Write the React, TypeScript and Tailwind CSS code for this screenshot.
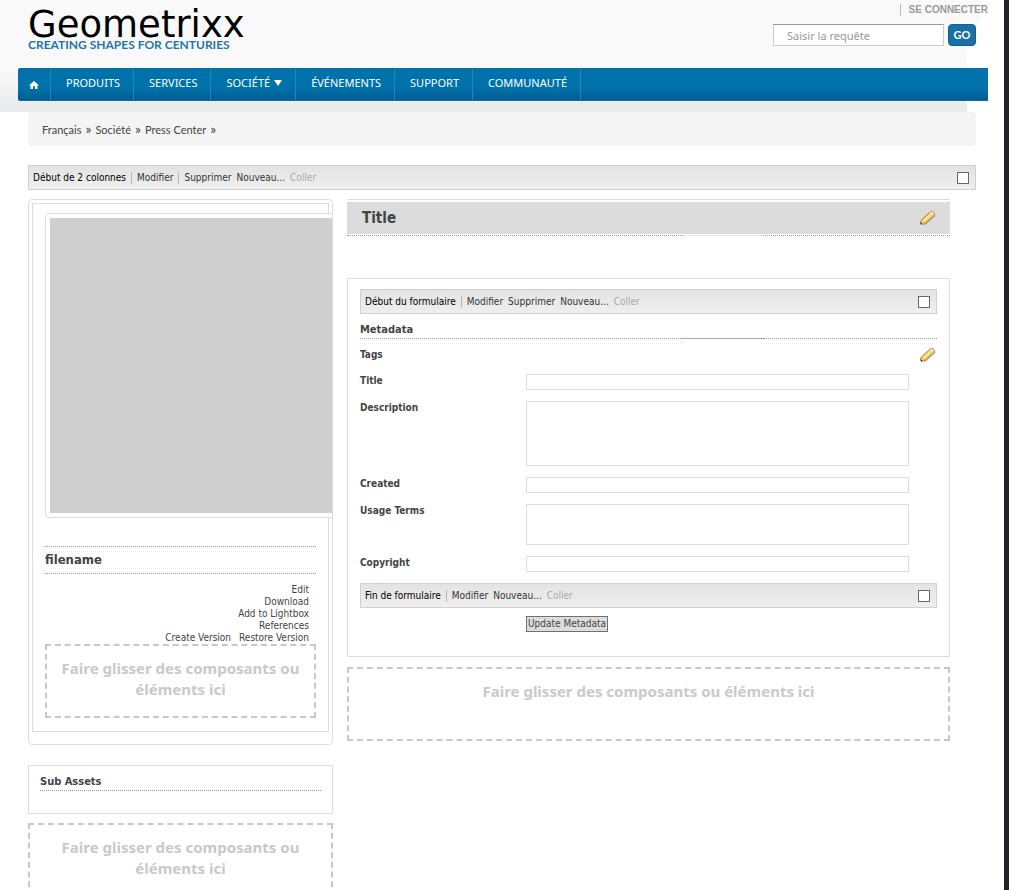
import type { ReactNode } from "react";

const NAV = ["PRODUITS", "SERVICES", "SOCIÉTÉ", "ÉVÉNEMENTS", "SUPPORT", "COMMUNAUTÉ"];
const CRUMBS = ["Français", "Société", "Press Center"];

function Pencil() {
  return (
    <svg width="18" height="18" viewBox="0 0 18 18" aria-hidden="true">
      <path d="M4 16 7 15.6 16.6 7 15.6 4.6 8 12Z" fill="#85858c" opacity=".6" />
      <path d="M1.6 14.2 2 11.4 11 3Q12.8 1.6 14.6 3 16 4.6 14.6 6.4L6 14.4 3 15.2Z" fill="#f3c356" stroke="#b57f3e" />
      <path d="M11 3.2Q12.8 1.8 14.4 3.2 15.8 4.6 14.4 6.3L13.2 7.3 10 4.2Z" fill="#f8e0cc" stroke="#d9a878" strokeWidth=".6" />
      <path d="M4.2 12 11.2 5.6" stroke="#fff79a" strokeWidth="1.3" />
      <path d="M5.6 13 12.4 6.8" stroke="#fbe45c" strokeWidth="1.3" />
      <path d="M2.2 11.8 5.4 14.4 2.6 15Z" fill="#f2cfa4" />
      <path d="M1.5 13 3.8 15 1.8 15.4Z" fill="#33241a" />
    </svg>
  );
}

function DropZone() {
  return (
    <div className="h-[74px] border-2 border-dashed border-[#c8c8c8] px-3 pt-3 text-center font-['Noto_Sans',sans-serif] text-[15px] leading-[21px] font-bold text-[#c9c9c9]">
      Faire glisser des composants ou éléments ici
    </div>
  );
}

function Separator() {
  return <span className="h-3 w-px bg-[#b9b9b0]" />;
}

function EditBar({ title, actions, split = false }: { title: string; actions: string[]; split?: boolean }) {
  return (
    <div className="flex h-[25px] items-center gap-[5px] border border-[#d0d0d0] bg-linear-to-b from-[#e3e3e3] to-[#efefef] pr-[6px] pl-1 text-[#333]">
      <span className="text-black">{title}</span>
      <Separator />
      {actions.map((a, i) => (
        <span key={a} className="flex items-center gap-[5px]">
          <button type="button">{a}</button>
          {split && i === 0 && <Separator />}
        </span>
      ))}
      <button type="button" disabled className="text-[#aaa]">Coller</button>
      <input
        type="checkbox"
        aria-label={title}
        className="ml-auto size-3 appearance-none border border-[#666] bg-white checked:bg-[#0072aa]"
      />
    </div>
  );
}

function BrokenRule({ middle }: { middle: ReactNode }) {
  return (
    <div className="flex">
      <span className="flex-1 border-b border-dotted border-[#999]" />
      {middle}
    </div>
  );
}

function Field({ id, label, rows }: { id: string; label: string; rows?: string }) {
  const box = "block w-full resize-none border border-[#ddd] bg-white px-1 outline-none";
  return (
    <div className="flex pr-7">
      <label htmlFor={id} className="w-[166px] shrink-0 leading-[14px] font-bold">{label}</label>
      <div className="flex-1">
        {rows ? <textarea id={id} className={`${box} ${rows}`} /> : <input id={id} type="text" className={`${box} h-4`} />}
      </div>
    </div>
  );
}

export default function App() {
  return (
    <div className="flex min-h-screen bg-white font-['DejaVu_Sans_Condensed','DejaVu_Sans',sans-serif] text-[10px] leading-3 text-[#444]">
      <div className="min-w-0 flex-1">
        <header className="bg-[linear-gradient(#f9f9f9,#f9f9f9),linear-gradient(#f9f9f9_62%,#e8e9eb)] bg-[length:calc(100%-23px)_23px,calc(100%-37px)_112px] bg-no-repeat">
          <div className="flex h-[68px] justify-between pr-4 pl-7">
            <a href="#home" className="pt-2 whitespace-nowrap">
              <span className="block font-['DejaVu_Sans',sans-serif] text-[37px] leading-[34px] text-black">Geometrixx</span>
              <span className="block font-['Lato',sans-serif] text-xs leading-[6px] font-bold text-[#1f75a8]">CREATING SHAPES FOR CENTURIES</span>
            </a>
            <div className="pt-1">
              <div className="flex justify-end">
                <a href="#login" className="border-l border-[#bbb] pl-2 font-['Liberation_Sans',sans-serif] font-bold text-[#999]">SE CONNECTER</a>
              </div>
              <form className="mt-2 flex gap-1 pr-3" onSubmit={(e) => e.preventDefault()}>
                <input
                  type="search"
                  aria-label="Saisir la requête"
                  placeholder="Saisir la requête"
                  className="h-[22px] w-[171px] border border-t-[#999] border-r-[#ccc] border-b-[#ccc] border-l-[#ccc] bg-white px-[13px] font-['Noto_Sans',sans-serif] text-[11px] outline-none placeholder:text-[#999]"
                />
                <button type="submit" className="h-[22px] w-7 rounded-sm border border-[#0f6095] bg-[#1a6fa5] font-['Lato',sans-serif] text-[11px] font-bold text-white">GO</button>
              </form>
            </div>
          </div>
          <nav className="mr-4 ml-[18px] flex h-[33px] rounded-l-xs border-y border-[#0a6ea3] bg-linear-to-b from-[#0072ab] from-60% to-[#005e93] font-['Noto_Sans',sans-serif] text-[11px] text-white">
            <a href="#home" aria-label="Accueil" className="flex w-[33px] items-center justify-center border-r border-[#2587b8]">
              <svg width="10" height="8" viewBox="0 0 10 8" aria-hidden="true">
                <path d="M5 0 0 4.6h1.5V8H4V5.3h2V8h2.5V4.6H10Z" fill="#fff" />
              </svg>
            </a>
            {NAV.map((n) => (
              <a key={n} href="#section" className="flex items-center gap-1 border-r border-[#2587b8] pr-[13px] pb-1 pl-[15px]">
                {n}
                {n === "SOCIÉTÉ" && (
                  <svg width="8" height="6" viewBox="0 0 8 6" aria-hidden="true">
                    <path d="M0 0h8L4 6Z" fill="#fff" />
                  </svg>
                )}
              </a>
            ))}
          </nav>
          <div className="h-[11px]" />
        </header>

        <main className="pr-7 pl-7">
          <nav aria-label="Fil d’Ariane" className="flex h-[34px] items-center gap-1 rounded bg-[#f4f4f4] pt-[2px] pl-[14px] font-['Lato',sans-serif] text-[11px]">
            {CRUMBS.map((c) => (
              <span key={c} className="flex gap-1">
                <a href="#crumb">{c}</a>
                <span className="text-sm leading-[10px]">»</span>
              </span>
            ))}
          </nav>

          <div className="mt-[19px]">
            <EditBar title="Début de 2 colonnes" actions={["Modifier", "Supprimer", "Nouveau..."]} split />
          </div>

          <div className="mt-[9px] flex items-start gap-[14px]">
            <aside className="w-[305px] shrink-0">
              <section className="overflow-hidden rounded border border-[#ddd] px-[3px] pt-[3px] pb-3">
                <div className="border border-[#ddd] px-3 pt-[9px] pb-[13px]">
                  <div className="-mr-10 rounded border border-[#ddd] bg-white p-1">
                    <div className="h-[295px] bg-[#cfcfcf]" />
                  </div>
                  <h2 className="mt-7 border-y border-dotted border-[#999] text-[13px] leading-[26px] font-bold">filename</h2>
                  <div className="mt-[10px] flex flex-col items-end pr-[7px]">
                    <a href="#edit">Edit</a>
                    <a href="#download">Download</a>
                    <a href="#lightbox">Add to Lightbox</a>
                    <a href="#references">References</a>
                    <span className="flex gap-2">
                      <a href="#create">Create Version</a>
                      <a href="#restore">Restore Version</a>
                    </span>
                  </div>
                  <DropZone />
                </div>
              </section>
              <section className="mt-5 mb-[9px] h-[49px] border border-[#ddd] px-[11px] pt-2">
                <h2 className="border-b border-dotted border-[#999] text-[11px] leading-4 font-bold">Sub Assets</h2>
              </section>
              <DropZone />
            </aside>

            <div className="mr-[26px] min-w-0 flex-1">
              <div className="mb-[2px] border-t border-[#ddd]" />
              <div className="flex h-8 items-center justify-between bg-[#dcdcdc] pr-[13px] pl-[15px]">
                <h1 className="text-[15px] font-bold">Title</h1>
                <button type="button" aria-label="Modifier le titre"><Pencil /></button>
              </div>
              <div className="mt-[1px]">
                <BrokenRule middle={<><span className="w-20 border-b border-[#e8e8e8]" /><span className="w-[187px] border-b border-dotted border-[#999]" /></>} />
              </div>
              <form className="mt-[42px] border border-[#ddd] px-3 pt-[10px] pb-6" onSubmit={(e) => e.preventDefault()}>
                <EditBar title="Début du formulaire" actions={["Modifier", "Supprimer", "Nouveau..."]} />
                <h2 className="mt-2 text-[11px] leading-4 font-bold">Metadata</h2>
                <BrokenRule middle={<><span className="w-20 border-b border-[#aaa]" /><span className="w-[174px] border-b border-dotted border-[#999]" /></>} />
                <div className="mt-[7px] mb-[10px] flex h-[18px] items-center justify-between font-bold">
                  <span>Tags</span>
                  <button type="button" aria-label="Modifier les tags"><Pencil /></button>
                </div>
                <div className="flex flex-col gap-[11px]">
                  <Field id="title" label="Title" />
                  <Field id="description" label="Description" rows="h-[65px]" />
                  <Field id="created" label="Created" />
                  <Field id="usage" label="Usage Terms" rows="h-[41px]" />
                  <Field id="copyright" label="Copyright" />
                  <EditBar title="Fin de formulaire" actions={["Modifier", "Nouveau..."]} />
                </div>
                <button type="submit" className="mt-2 ml-[166px] block h-4 border border-[#707070] bg-[#ddd] px-[1px] whitespace-nowrap">Update Metadata</button>
              </form>
              <div className="mt-[10px]">
                <DropZone />
              </div>
            </div>
          </div>
        </main>
      </div>
      <div className="w-[5px] shrink-0 bg-[#202228]" />
    </div>
  );
}
